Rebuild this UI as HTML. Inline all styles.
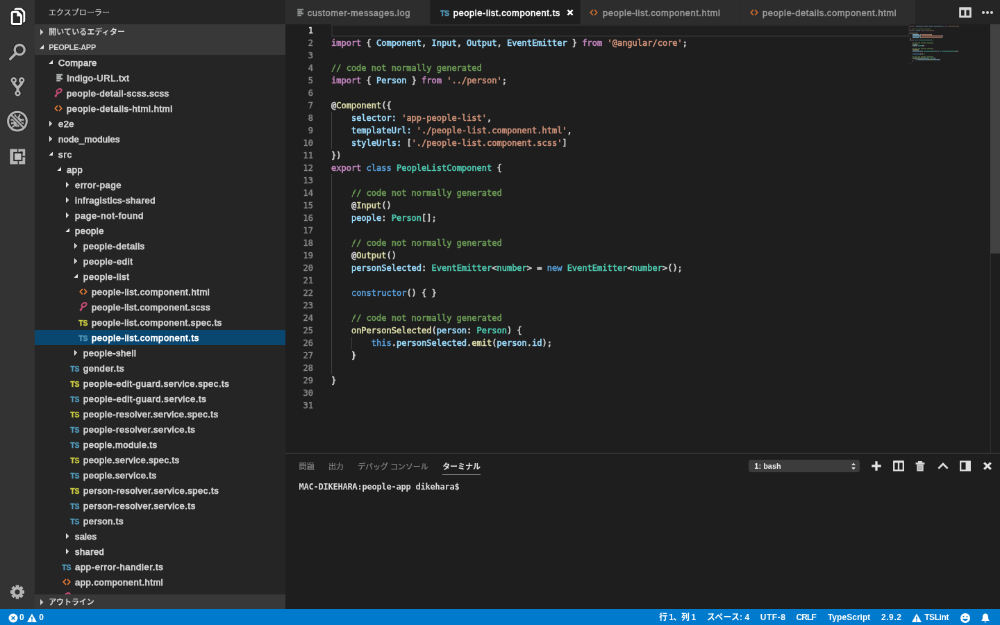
<!DOCTYPE html>
<html lang="ja">
<head>
<meta charset="utf-8">
<title>people-list.component.ts — people-app</title>
<style>
*{box-sizing:border-box;margin:0;padding:0}
html,body{width:1000px;height:625px;overflow:hidden;background:#1e1e1e}
body{font-family:"Liberation Sans","Noto Sans CJK JP",sans-serif;font-size:13px;color:#cccccc}
#app{position:absolute;left:0;top:0;width:1440px;height:900px;transform:scale(0.694444);transform-origin:0 0;background:#1e1e1e;overflow:hidden;will-change:transform}
#act{position:absolute;left:0;top:0;width:50px;height:878px;background:#333333}
#act .ai{position:absolute;left:0;width:50px;height:50px}
#act svg{position:absolute;left:0;top:0;width:50px;height:50px}
#side{position:absolute;left:50px;top:0;width:361px;height:878px;background:#252526;overflow:hidden}
#side .title{height:35px;line-height:36px;padding-left:20px;font-size:11px;color:#c4c4c4;-webkit-text-stroke:0.25px #c4c4c4;white-space:nowrap}
.hdr{height:22px;line-height:23px;font-size:11px;font-weight:bold;color:#d6d6d6;position:relative;padding-left:20.2px;white-space:nowrap}
.hdr svg{position:absolute;left:2px;top:3px;width:16px;height:16px}
#tree{position:absolute;left:0;top:79px;width:361px;height:777px;overflow:hidden}
.row{height:22px;line-height:22px;white-space:nowrap;position:relative;color:#d4d4d4;display:flex;align-items:center}
.row.sel{background:#094771;color:#ffffff}
.row .tw{width:16px;height:16px;flex:none;margin-right:3px}
.row .ic{width:16px;height:16px;flex:none;margin-right:4.2px;margin-left:-1.2px}
span.ic{font-size:10.500px;font-weight:bold;text-align:center;line-height:18px;letter-spacing:-0.2px;display:inline-block;-webkit-text-stroke:0.35px currentColor}
.ts{color:#519aba}.spec{color:#cbcb41}
.row .lb{font-size:13px;position:relative;top:1.2px;-webkit-text-stroke:0.75px currentColor}
#outline{position:absolute;left:0;top:856px;width:361px;background:#383839}
#tabs{position:absolute;left:411px;top:0;width:1029px;height:35px;background:#252526}
.tab{position:absolute;top:0;height:35px;background:#2d2d2d;color:#9a9a9a;font-size:13px;white-space:nowrap;border-right:1px solid #252526}
.tab.act{background:#1e1e1e;color:#ffffff}
.tab .tic{position:absolute;top:9.5px;width:16px;height:16px}
.tab .tic .ic{width:16px;height:16px;display:block}
.tab .tlb{position:absolute;top:0;line-height:37px;-webkit-text-stroke:0.5px currentColor}
.tab .tx{position:absolute;top:12px;width:12px;height:12px}
#editor{position:absolute;left:411px;top:35px;width:1029px;height:617px;background:#1e1e1e;overflow:hidden;font-family:"DejaVu Sans Mono","Liberation Mono",monospace;font-size:12px}
.ln{height:18px;line-height:18px;white-space:pre;position:relative}
.ln .no{position:absolute;left:0;width:40px;-webkit-text-stroke:0.5px currentColor;text-align:right;color:#858585}
.ln.cur .no{color:#e8e8e8;-webkit-text-stroke:0.4px #e8e8e8}
.ln .tx{position:absolute;left:66px;-webkit-text-stroke:0.6px currentColor}
.ln.cur::after{content:"";box-sizing:border-box;position:absolute;left:65.5px;top:0;width:833.500px;height:18px;border:2px solid #2c2c2c}
.k{color:#c586c0}.v{color:#9cdcfe}.s{color:#ce9178}.c{color:#6a9955}.b{color:#569cd6}.t{color:#4ec9b0}.f{color:#dcdcaa}.d{color:#d4d4d4}
.guide{position:absolute;width:1px;background:#404040}
.mini{position:absolute;left:899px;top:0}
#vs{position:absolute;left:1015px;top:0;width:14px;height:330px;background:#424242}
#vsl{position:absolute;left:1015px;top:0;width:1px;height:617px;background:#303030}
#panel{position:absolute;left:411px;top:652px;width:1029px;height:226px;background:#1e1e1e;border-top:1px solid #4a4a4a}
#panel .pt{position:absolute;top:8px;height:23px;line-height:22.500px;font-size:11px;color:#8a8a8a;white-space:nowrap;-webkit-text-stroke:0.2px currentColor}
#panel .pt.on{color:#e7e7e7;border-bottom:1px solid #8a8a8a;font-weight:bold;-webkit-text-stroke:0}
#term{position:absolute;left:19.5px;top:39.3px;font-family:"DejaVu Sans Mono","Liberation Mono",monospace;font-size:12px;font-weight:bold;color:#dcdcdc;line-height:18px;white-space:pre;letter-spacing:-0.224px}
#sel{position:absolute;left:667.3px;top:8.8px;width:159.3px;height:18.2px;background:#3c3c3c;border-radius:4px;color:#f0f0f0;font-size:11px;line-height:19px;padding-left:8px;font-weight:bold}
#panel svg.pi{position:absolute;top:8.1px;width:20px;height:20px}
#status{position:absolute;left:0;top:877px;width:1440px;height:23px;background:#007acc;color:#ffffff;font-size:12px;line-height:25px;white-space:nowrap}
#status .si{position:absolute;top:0;height:23px;font-weight:bold}
#status svg{position:absolute;top:4.5px;width:16px;height:16px}
</style>
</head>
<body>
<div id="app">
 <div id="act">
  <div class="ai" style="top:0"><svg viewBox="0 0 50 50"><g fill="none" stroke-linejoin="round"><path d="M22 15 V14.300 Q22 12.800 23.500 12.800 H30.200 L34.800 17.400 V29.600 Q34.800 31 33.400 31 H32" stroke="#1c1c1c" stroke-width="5.4"/><path d="M22 15 V14.300 Q22 12.800 23.500 12.800 H30.200 L34.800 17.400 V29.600 Q34.800 31 33.400 31 H32" stroke="#ffffff" stroke-width="3"/><path d="M17.200 18.700 Q17.200 17.200 18.700 17.200 H25.600 L30.600 22.200 V33 Q30.600 34.500 29.100 34.500 H18.700 Q17.200 34.500 17.200 33 Z" stroke="#1c1c1c" stroke-width="5.4"/><path d="M17.200 18.700 Q17.200 17.200 18.700 17.200 H25.600 L30.600 22.200 V33 Q30.600 34.500 29.100 34.500 H18.700 Q17.200 34.500 17.200 33 Z" stroke="#ffffff" stroke-width="3" fill="#2a2a2a"/></g><path d="M24.400 17.200 V23.400 H30.600 V22.200 L25.600 17.200 Z" fill="#ffffff"/></svg></div>
  <div class="ai" style="top:50px"><svg viewBox="0 0 50 50"><g fill="none"><circle cx="28.200" cy="21.600" r="7.100" stroke="#262626" stroke-width="5.600"/><path d="M22.600 27.200 L14.800 35" stroke="#262626" stroke-width="6" stroke-linecap="round"/><circle cx="28.200" cy="21.600" r="7.100" stroke="#b4b4b4" stroke-width="3.400"/><path d="M22.800 27 L14.800 35" stroke="#b4b4b4" stroke-width="3.800" stroke-linecap="round"/></g></svg></div>
  <div class="ai" style="top:100px"><svg viewBox="0 0 50 50"><g fill="none" stroke-linejoin="round"><g stroke="#262626"><circle cx="19.800" cy="15.600" r="2.900" stroke-width="5"/><circle cx="31.200" cy="15.600" r="2.900" stroke-width="5"/><circle cx="25.500" cy="34.200" r="2.900" stroke-width="5"/><path d="M19.800 18.800 V20.200 L25.500 27 V31 M31.200 18.800 V20.200 L25.500 27" stroke-width="6.200"/></g><g stroke="#b4b4b4"><path d="M19.800 18.600 V20.200 L25.500 27 V31.200 M31.200 18.600 V20.200 L25.500 27" stroke-width="3.900"/><circle cx="19.800" cy="15.600" r="2.900" stroke-width="2.700"/><circle cx="31.200" cy="15.600" r="2.900" stroke-width="2.700"/><circle cx="25.500" cy="34.200" r="2.900" stroke-width="2.700"/></g></g><circle cx="19.800" cy="15.600" r="1.500" fill="#2a2a2a"/><circle cx="31.200" cy="15.600" r="1.500" fill="#2a2a2a"/><circle cx="25.500" cy="34.200" r="1.500" fill="#2a2a2a"/></svg></div>
  <div class="ai" style="top:150px"><svg viewBox="0 0 50 50"><g fill="none"><circle cx="25" cy="24.600" r="13.400" stroke="#262626" stroke-width="5.200"/><circle cx="25" cy="24.600" r="13.400" stroke="#b4b4b4" stroke-width="3.100"/><g stroke="#b4b4b4" stroke-width="2.300"><path d="M21 14.800 L23 18.500 M29 14.800 L27 18.500 M15.500 22.500 H21 M29 22.500 H34.500 M16 27.500 H21 M29 27.500 H34 M17.500 33.500 L21.500 30 M32.500 33.500 L28.500 30"/></g></g><ellipse cx="25" cy="25.500" rx="5.600" ry="7.600" fill="#b4b4b4"/><path d="M25 19 V33" stroke="#555" stroke-width="1"/><path d="M16.800 16.400 L33.200 32.800" stroke="#2a2a2a" stroke-width="4.800"/><path d="M15.800 15.400 L34.200 33.800" stroke="#b4b4b4" stroke-width="2.500"/></svg></div>
  <div class="ai" style="top:200px"><svg viewBox="0 0 50 50"><rect x="13.300" y="13.500" width="24" height="24" fill="#262626"/><rect x="14.300" y="14.500" width="22" height="22" fill="#b4b4b4"/><path d="M25.700 14.500 V21 M26.300 30 V36.500" stroke="#2a2a2a" stroke-width="1.500"/><path d="M31 25.500 H36.300" stroke="#2a2a2a" stroke-width="1.700"/><rect x="20.300" y="20" width="11" height="11" fill="none" stroke="#2a2a2a" stroke-width="2.200"/><rect x="29" y="18.300" width="3.500" height="3" fill="#1a1a1a"/><rect x="21.200" y="20.900" width="9.200" height="9.200" fill="#c2c2c2"/></svg></div>
  <div class="ai" style="top:828px"><svg viewBox="0 0 50 50"><g transform="translate(25 24.500)"><g fill="#262626"><circle r="9"/></g><g fill="#b4b4b4"><rect x="-2.400" y="-10" width="4.800" height="20" rx="0.800"/><rect x="-2.400" y="-10" width="4.800" height="20" rx="0.800" transform="rotate(45)"/><rect x="-2.400" y="-10" width="4.800" height="20" rx="0.800" transform="rotate(90)"/><rect x="-2.400" y="-10" width="4.800" height="20" rx="0.800" transform="rotate(135)"/><circle r="7.600"/></g><circle r="2.900" fill="#333333" stroke="#222" stroke-width="1.200"/></g></svg></div>
 </div>

 <div id="side">
  <div style="position:absolute;left:0;top:35px;width:361px;height:44px;background:#383839"></div><div class="title"><span style="letter-spacing:0.045px">エクスプローラー</span></div>
  <div class="hdr"><svg viewBox="0 0 16 16"><path d="M6 3.800 L10.400 8.200 L6 12.600 Z" fill="#d0d0d0"/></svg><span style="letter-spacing:0.099px">開いているエディター</span></div>
  <div class="hdr"><svg viewBox="0 0 16 16"><path fill="#e8e8e8" d="M11 10.5H4.900L11 4.400z"/></svg><span style="letter-spacing:-0.318px">PEOPLE-APP</span></div>
  <div id="tree">
<div class="row" style="padding-left:15px"><svg class="tw" viewBox="0 0 16 16"><path fill="#e8e8e8" d="M11 10.07H5.344L11 4.414v5.656z"/></svg><span class="lb" style="letter-spacing:0.309px">Compare</span></div>
<div class="row" style="padding-left:27px"><svg class="ic" viewBox="0 0 16 16"><path d="M5.300 3.800 H14.100 M5.300 6.600 H12.100 M5.300 9.400 H14.100 M5.300 12.200 H11" fill="none" stroke="#c4c6c5" stroke-width="2.1"/></svg><span class="lb" style="letter-spacing:0.513px">Indigo-URL.txt</span></div>
<div class="row" style="padding-left:27px"><svg class="ic" viewBox="0 0 16 16"><path d="M4.6 13.300 C3 12.900 3.300 11 5 11.300 C5.500 10 6.200 9 7.100 8.200 C4.900 7.500 5 4.600 7.400 3 C9.800 1.400 13 1.700 12.600 4.100 C12.200 6.300 9.500 7.800 7.100 8.200" fill="none" stroke="#c84c76" stroke-width="2" stroke-linecap="round"/></svg><span class="lb" style="letter-spacing:0.573px">people-detail-scss.scss</span></div>
<div class="row" style="padding-left:27px"><svg class="ic" viewBox="0 0 16 16"><path d="M6.900 4.100 L3.300 8 L6.900 11.900 M9.100 4.100 L12.700 8 L9.100 11.900" fill="none" stroke="#e37933" stroke-width="1.800"/></svg><span class="lb" style="letter-spacing:0.61px">people-details-html.html</span></div>
<div class="row" style="padding-left:15px"><svg class="tw" viewBox="0 0 16 16"><path fill="#b0b0b0" d="M6 4v8l4-4z"/><path fill="#e8e8e8" d="M6 4v8l4-4-4-4zm1 2.414L8.586 8 7 9.586V6.414z"/></svg><span class="lb" style="letter-spacing:0.428px">e2e</span></div>
<div class="row" style="padding-left:15px"><svg class="tw" viewBox="0 0 16 16"><path fill="#b0b0b0" d="M6 4v8l4-4z"/><path fill="#e8e8e8" d="M6 4v8l4-4-4-4zm1 2.414L8.586 8 7 9.586V6.414z"/></svg><span class="lb" style="letter-spacing:0.286px">node_modules</span></div>
<div class="row" style="padding-left:15px"><svg class="tw" viewBox="0 0 16 16"><path fill="#e8e8e8" d="M11 10.07H5.344L11 4.414v5.656z"/></svg><span class="lb" style="letter-spacing:0.988px">src</span></div>
<div class="row" style="padding-left:27px"><svg class="tw" viewBox="0 0 16 16"><path fill="#e8e8e8" d="M11 10.07H5.344L11 4.414v5.656z"/></svg><span class="lb" style="letter-spacing:0.548px">app</span></div>
<div class="row" style="padding-left:39px"><svg class="tw" viewBox="0 0 16 16"><path fill="#b0b0b0" d="M6 4v8l4-4z"/><path fill="#e8e8e8" d="M6 4v8l4-4-4-4zm1 2.414L8.586 8 7 9.586V6.414z"/></svg><span class="lb" style="letter-spacing:0.655px">error-page</span></div>
<div class="row" style="padding-left:39px"><svg class="tw" viewBox="0 0 16 16"><path fill="#b0b0b0" d="M6 4v8l4-4z"/><path fill="#e8e8e8" d="M6 4v8l4-4-4-4zm1 2.414L8.586 8 7 9.586V6.414z"/></svg><span class="lb" style="letter-spacing:0.559px">infragistics-shared</span></div>
<div class="row" style="padding-left:39px"><svg class="tw" viewBox="0 0 16 16"><path fill="#b0b0b0" d="M6 4v8l4-4z"/><path fill="#e8e8e8" d="M6 4v8l4-4-4-4zm1 2.414L8.586 8 7 9.586V6.414z"/></svg><span class="lb" style="letter-spacing:0.776px">page-not-found</span></div>
<div class="row" style="padding-left:39px"><svg class="tw" viewBox="0 0 16 16"><path fill="#e8e8e8" d="M11 10.07H5.344L11 4.414v5.656z"/></svg><span class="lb" style="letter-spacing:0.471px">people</span></div>
<div class="row" style="padding-left:51px"><svg class="tw" viewBox="0 0 16 16"><path fill="#b0b0b0" d="M6 4v8l4-4z"/><path fill="#e8e8e8" d="M6 4v8l4-4-4-4zm1 2.414L8.586 8 7 9.586V6.414z"/></svg><span class="lb" style="letter-spacing:0.548px">people-details</span></div>
<div class="row" style="padding-left:51px"><svg class="tw" viewBox="0 0 16 16"><path fill="#b0b0b0" d="M6 4v8l4-4z"/><path fill="#e8e8e8" d="M6 4v8l4-4-4-4zm1 2.414L8.586 8 7 9.586V6.414z"/></svg><span class="lb" style="letter-spacing:0.647px">people-edit</span></div>
<div class="row" style="padding-left:51px"><svg class="tw" viewBox="0 0 16 16"><path fill="#e8e8e8" d="M11 10.07H5.344L11 4.414v5.656z"/></svg><span class="lb" style="letter-spacing:0.649px">people-list</span></div>
<div class="row" style="padding-left:63px"><svg class="ic" viewBox="0 0 16 16"><path d="M6.900 4.100 L3.300 8 L6.900 11.900 M9.100 4.100 L12.700 8 L9.100 11.900" fill="none" stroke="#e37933" stroke-width="1.800"/></svg><span class="lb" style="letter-spacing:0.573px">people-list.component.html</span></div>
<div class="row" style="padding-left:63px"><svg class="ic" viewBox="0 0 16 16"><path d="M4.6 13.300 C3 12.900 3.300 11 5 11.300 C5.500 10 6.200 9 7.100 8.200 C4.900 7.500 5 4.600 7.400 3 C9.800 1.400 13 1.700 12.600 4.100 C12.200 6.300 9.500 7.800 7.100 8.200" fill="none" stroke="#c84c76" stroke-width="2" stroke-linecap="round"/></svg><span class="lb" style="letter-spacing:0.544px">people-list.component.scss</span></div>
<div class="row" style="padding-left:63px"><span class="ic spec">TS</span><span class="lb" style="letter-spacing:0.548px">people-list.component.spec.ts</span></div>
<div class="row sel" style="padding-left:63px"><span class="ic ts">TS</span><span class="lb" style="letter-spacing:0.577px">people-list.component.ts</span></div>
<div class="row" style="padding-left:51px"><svg class="tw" viewBox="0 0 16 16"><path fill="#b0b0b0" d="M6 4v8l4-4z"/><path fill="#e8e8e8" d="M6 4v8l4-4-4-4zm1 2.414L8.586 8 7 9.586V6.414z"/></svg><span class="lb" style="letter-spacing:0.521px">people-shell</span></div>
<div class="row" style="padding-left:51px"><span class="ic ts">TS</span><span class="lb" style="letter-spacing:0.633px">gender.ts</span></div>
<div class="row" style="padding-left:51px"><span class="ic spec">TS</span><span class="lb" style="letter-spacing:0.571px">people-edit-guard.service.spec.ts</span></div>
<div class="row" style="padding-left:51px"><span class="ic ts">TS</span><span class="lb" style="letter-spacing:0.601px">people-edit-guard.service.ts</span></div>
<div class="row" style="padding-left:51px"><span class="ic spec">TS</span><span class="lb" style="letter-spacing:0.515px">people-resolver.service.spec.ts</span></div>
<div class="row" style="padding-left:51px"><span class="ic ts">TS</span><span class="lb" style="letter-spacing:0.536px">people-resolver.service.ts</span></div>
<div class="row" style="padding-left:51px"><span class="ic ts">TS</span><span class="lb" style="letter-spacing:0.471px">people.module.ts</span></div>
<div class="row" style="padding-left:51px"><span class="ic spec">TS</span><span class="lb" style="letter-spacing:0.452px">people.service.spec.ts</span></div>
<div class="row" style="padding-left:51px"><span class="ic ts">TS</span><span class="lb" style="letter-spacing:0.465px">people.service.ts</span></div>
<div class="row" style="padding-left:51px"><span class="ic spec">TS</span><span class="lb" style="letter-spacing:0.515px">person-resolver.service.spec.ts</span></div>
<div class="row" style="padding-left:51px"><span class="ic ts">TS</span><span class="lb" style="letter-spacing:0.521px">person-resolver.service.ts</span></div>
<div class="row" style="padding-left:51px"><span class="ic ts">TS</span><span class="lb" style="letter-spacing:0.499px">person.ts</span></div>
<div class="row" style="padding-left:39px"><svg class="tw" viewBox="0 0 16 16"><path fill="#b0b0b0" d="M6 4v8l4-4z"/><path fill="#e8e8e8" d="M6 4v8l4-4-4-4zm1 2.414L8.586 8 7 9.586V6.414z"/></svg><span class="lb" style="letter-spacing:0.15px">sales</span></div>
<div class="row" style="padding-left:39px"><svg class="tw" viewBox="0 0 16 16"><path fill="#b0b0b0" d="M6 4v8l4-4z"/><path fill="#e8e8e8" d="M6 4v8l4-4-4-4zm1 2.414L8.586 8 7 9.586V6.414z"/></svg><span class="lb" style="letter-spacing:0.402px">shared</span></div>
<div class="row" style="padding-left:39px"><span class="ic ts">TS</span><span class="lb" style="letter-spacing:0.66px">app-error-handler.ts</span></div>
<div class="row" style="padding-left:39px"><svg class="ic" viewBox="0 0 16 16"><path d="M6.900 4.100 L3.300 8 L6.900 11.900 M9.100 4.100 L12.700 8 L9.100 11.900" fill="none" stroke="#e37933" stroke-width="1.800"/></svg><span class="lb" style="letter-spacing:0.525px">app.component.html</span></div>
<div class="row" style="padding-left:39px"><svg class="ic" viewBox="0 0 16 16"><path d="M4.6 13.300 C3 12.900 3.300 11 5 11.300 C5.500 10 6.200 9 7.100 8.200 C4.900 7.500 5 4.600 7.400 3 C9.800 1.400 13 1.700 12.600 4.100 C12.200 6.300 9.500 7.800 7.100 8.200" fill="none" stroke="#c84c76" stroke-width="2" stroke-linecap="round"/></svg><span class="lb" style="letter-spacing:0.356px">app.component.scss</span></div>
  </div>
  <div id="outline" class="hdr"><svg viewBox="0 0 16 16"><path d="M6 3.800 L10.400 8.200 L6 12.600 Z" fill="#d0d0d0"/></svg><span style="letter-spacing:-0.096px">アウトライン</span></div>
 </div>

 <div id="tabs">
<div class="tab" style="left:0.12px;width:208.8px"><span class="tic" style="left:12.16px"><svg class="ic" viewBox="0 0 16 16"><path d="M5.300 3.800 H14.100 M5.300 6.600 H12.100 M5.300 9.400 H14.100 M5.300 12.200 H11" fill="none" stroke="#8e9190" stroke-width="2.1"/></svg></span><span class="tlb" style="left:31.68px;letter-spacing:0.48px">customer-messages.log</span></div>
<div class="tab act" style="left:208.92px;width:215.64px"><span class="tic" style="left:12.52px"><span class="ic ts">TS</span></span><span class="tlb" style="left:32.76px;letter-spacing:0.556px">people-list.component.ts</span><svg class="tx" style="left:195.24px" viewBox="0 0 12 12"><path d="M2.400 2.400 L9.600 9.600 M9.600 2.400 L2.400 9.600" stroke="#ffffff" stroke-width="2.500"/></svg></div>
<div class="tab" style="left:424.56px;width:230.04px"><span class="tic" style="left:11.8px"><svg class="ic" viewBox="0 0 16 16"><path d="M6.900 4.100 L3.300 8 L6.900 11.900 M9.100 4.100 L12.700 8 L9.100 11.900" fill="none" stroke="#c96a2c" stroke-width="1.800"/></svg></span><span class="tlb" style="left:32.4px;letter-spacing:0.539px">people-list.component.html</span></div>
<div class="tab" style="left:654.6px;width:253.73px"><span class="tic" style="left:12.3px"><svg class="ic" viewBox="0 0 16 16"><path d="M6.900 4.100 L3.300 8 L6.900 11.900 M9.100 4.100 L12.700 8 L9.100 11.900" fill="none" stroke="#c96a2c" stroke-width="1.800"/></svg></span><span class="tlb" style="left:32.4px;letter-spacing:0.555px">people-details.component.html</span></div>
  <svg style="position:absolute;left:968.7px;top:7.7px;width:20px;height:20px" viewBox="0 0 20 20"><path d="M2.600 4 H17.400 V16 H2.600 Z M10 4 V16" fill="none" stroke="#d8d8d8" stroke-width="2.800"/><path d="M2.600 4.500 H17.400" stroke="#d8d8d8" stroke-width="3.800"/></svg>
  <svg style="position:absolute;left:1001.2px;top:7.7px;width:20px;height:20px" viewBox="0 0 20 20"><circle cx="4" cy="10" r="2.100" fill="#d8d8d8"/><circle cx="10" cy="10" r="2.100" fill="#d8d8d8"/><circle cx="16" cy="10" r="2.100" fill="#d8d8d8"/></svg>
 </div>

 <div id="editor">
<div class="ln cur"><span class="no">1</span><span class="tx"></span></div>
<div class="ln"><span class="no">2</span><span class="tx"><span class="k">import</span><span class="d"> { </span><span class="v">Component</span><span class="d">, </span><span class="v">Input</span><span class="d">, </span><span class="v">Output</span><span class="d">, </span><span class="v">EventEmitter</span><span class="d"> } </span><span class="k">from</span><span class="d"> </span><span class="s">&#x27;@angular/core&#x27;</span><span class="d">;</span></span></div>
<div class="ln"><span class="no">3</span><span class="tx"></span></div>
<div class="ln"><span class="no">4</span><span class="tx"><span class="c">// code not normally generated</span></span></div>
<div class="ln"><span class="no">5</span><span class="tx"><span class="k">import</span><span class="d"> { </span><span class="v">Person</span><span class="d"> } </span><span class="k">from</span><span class="d"> </span><span class="s">&#x27;../person&#x27;</span><span class="d">;</span></span></div>
<div class="ln"><span class="no">6</span><span class="tx"></span></div>
<div class="ln"><span class="no">7</span><span class="tx"><span class="d">@</span><span class="f">Component</span><span class="d">({</span></span></div>
<div class="ln"><span class="no">8</span><span class="tx"><span class="d">    </span><span class="v">selector</span><span class="v">:</span><span class="d"> </span><span class="s">&#x27;app-people-list&#x27;</span><span class="d">,</span></span></div>
<div class="ln"><span class="no">9</span><span class="tx"><span class="d">    </span><span class="v">templateUrl</span><span class="v">:</span><span class="d"> </span><span class="s">&#x27;./people-list.component.html&#x27;</span><span class="d">,</span></span></div>
<div class="ln"><span class="no">10</span><span class="tx"><span class="d">    </span><span class="v">styleUrls</span><span class="v">:</span><span class="d"> [</span><span class="s">&#x27;./people-list.component.scss&#x27;</span><span class="d">]</span></span></div>
<div class="ln"><span class="no">11</span><span class="tx"><span class="d">})</span></span></div>
<div class="ln"><span class="no">12</span><span class="tx"><span class="k">export</span><span class="d"> </span><span class="b">class</span><span class="d"> </span><span class="t">PeopleListComponent</span><span class="d"> {</span></span></div>
<div class="ln"><span class="no">13</span><span class="tx"></span></div>
<div class="ln"><span class="no">14</span><span class="tx"><span class="d">    </span><span class="c">// code not normally generated</span></span></div>
<div class="ln"><span class="no">15</span><span class="tx"><span class="d">    @</span><span class="f">Input</span><span class="d">()</span></span></div>
<div class="ln"><span class="no">16</span><span class="tx"><span class="d">    </span><span class="v">people</span><span class="d">: </span><span class="t">Person</span><span class="d">[];</span></span></div>
<div class="ln"><span class="no">17</span><span class="tx"></span></div>
<div class="ln"><span class="no">18</span><span class="tx"><span class="d">    </span><span class="c">// code not normally generated</span></span></div>
<div class="ln"><span class="no">19</span><span class="tx"><span class="d">    @</span><span class="f">Output</span><span class="d">()</span></span></div>
<div class="ln"><span class="no">20</span><span class="tx"><span class="d">    </span><span class="v">personSelected</span><span class="d">: </span><span class="t">EventEmitter</span><span class="d">&lt;</span><span class="t">number</span><span class="d">&gt; = </span><span class="b">new</span><span class="d"> </span><span class="t">EventEmitter</span><span class="d">&lt;</span><span class="t">number</span><span class="d">&gt;();</span></span></div>
<div class="ln"><span class="no">21</span><span class="tx"></span></div>
<div class="ln"><span class="no">22</span><span class="tx"><span class="d">    </span><span class="b">constructor</span><span class="d">() { }</span></span></div>
<div class="ln"><span class="no">23</span><span class="tx"></span></div>
<div class="ln"><span class="no">24</span><span class="tx"><span class="d">    </span><span class="c">// code not normally generated</span></span></div>
<div class="ln"><span class="no">25</span><span class="tx"><span class="d">    </span><span class="f">onPersonSelected</span><span class="d">(</span><span class="v">person</span><span class="d">: </span><span class="t">Person</span><span class="d">) {</span></span></div>
<div class="ln"><span class="no">26</span><span class="tx"><span class="d">        </span><span class="b">this</span><span class="d">.</span><span class="v">personSelected</span><span class="d">.</span><span class="f">emit</span><span class="d">(</span><span class="v">person</span><span class="d">.</span><span class="v">id</span><span class="d">);</span></span></div>
<div class="ln"><span class="no">27</span><span class="tx"><span class="d">    }</span></span></div>
<div class="ln"><span class="no">28</span><span class="tx"></span></div>
<div class="ln"><span class="no">29</span><span class="tx"><span class="d">}</span></span></div>
<div class="ln"><span class="no">30</span><span class="tx"></span></div>
<div class="ln"><span class="no">31</span><span class="tx"></span></div>
  <div class="guide" style="left:66px;top:126px;height:54px"></div>
  <div class="guide" style="left:66px;top:216px;height:288px"></div>
  <div class="guide" style="left:95px;top:450px;height:18px"></div>
  <svg class="mini" width="120" height="64" viewBox="0 0 120 64" preserveAspectRatio="none"><rect x="0" y="2.2" width="6" height="1.300" fill="#c586c0" opacity="0.42"/><rect x="7" y="2.2" width="1" height="1.300" fill="#d4d4d4" opacity="0.42"/><rect x="9" y="2.2" width="9" height="1.300" fill="#9cdcfe" opacity="0.42"/><rect x="18" y="2.2" width="1" height="1.300" fill="#d4d4d4" opacity="0.42"/><rect x="20" y="2.2" width="5" height="1.300" fill="#9cdcfe" opacity="0.42"/><rect x="25" y="2.2" width="1" height="1.300" fill="#d4d4d4" opacity="0.42"/><rect x="27" y="2.2" width="6" height="1.300" fill="#9cdcfe" opacity="0.42"/><rect x="33" y="2.2" width="1" height="1.300" fill="#d4d4d4" opacity="0.42"/><rect x="35" y="2.2" width="12" height="1.300" fill="#9cdcfe" opacity="0.42"/><rect x="48" y="2.2" width="1" height="1.300" fill="#d4d4d4" opacity="0.42"/><rect x="50" y="2.2" width="4" height="1.300" fill="#c586c0" opacity="0.42"/><rect x="55" y="2.2" width="15" height="1.300" fill="#ce9178" opacity="0.42"/><rect x="70" y="2.2" width="1" height="1.300" fill="#d4d4d4" opacity="0.42"/><rect x="0" y="6.2" width="2" height="1.300" fill="#6a9955" opacity="0.42"/><rect x="3" y="6.2" width="4" height="1.300" fill="#6a9955" opacity="0.42"/><rect x="8" y="6.2" width="3" height="1.300" fill="#6a9955" opacity="0.42"/><rect x="12" y="6.2" width="8" height="1.300" fill="#6a9955" opacity="0.42"/><rect x="21" y="6.2" width="9" height="1.300" fill="#6a9955" opacity="0.42"/><rect x="0" y="8.2" width="6" height="1.300" fill="#c586c0" opacity="0.42"/><rect x="7" y="8.2" width="1" height="1.300" fill="#d4d4d4" opacity="0.42"/><rect x="9" y="8.2" width="6" height="1.300" fill="#9cdcfe" opacity="0.42"/><rect x="16" y="8.2" width="1" height="1.300" fill="#d4d4d4" opacity="0.42"/><rect x="18" y="8.2" width="4" height="1.300" fill="#c586c0" opacity="0.42"/><rect x="23" y="8.2" width="11" height="1.300" fill="#ce9178" opacity="0.42"/><rect x="34" y="8.2" width="1" height="1.300" fill="#d4d4d4" opacity="0.42"/><rect x="0" y="12.2" width="1" height="1.300" fill="#d4d4d4" opacity="0.42"/><rect x="1" y="12.2" width="9" height="1.300" fill="#dcdcaa" opacity="0.42"/><rect x="10" y="12.2" width="2" height="1.300" fill="#d4d4d4" opacity="0.42"/><rect x="4" y="14.2" width="8" height="1.300" fill="#9cdcfe" opacity="0.85"/><rect x="12" y="14.2" width="1" height="1.300" fill="#9cdcfe" opacity="0.85"/><rect x="14" y="14.2" width="17" height="1.300" fill="#ce9178" opacity="0.85"/><rect x="31" y="14.2" width="1" height="1.300" fill="#d4d4d4" opacity="0.85"/><rect x="4" y="16.2" width="11" height="1.300" fill="#9cdcfe" opacity="0.85"/><rect x="15" y="16.2" width="1" height="1.300" fill="#9cdcfe" opacity="0.85"/><rect x="17" y="16.2" width="30" height="1.300" fill="#ce9178" opacity="0.85"/><rect x="47" y="16.2" width="1" height="1.300" fill="#d4d4d4" opacity="0.85"/><rect x="4" y="18.2" width="9" height="1.300" fill="#9cdcfe" opacity="0.85"/><rect x="13" y="18.2" width="1" height="1.300" fill="#9cdcfe" opacity="0.85"/><rect x="15" y="18.2" width="1" height="1.300" fill="#d4d4d4" opacity="0.85"/><rect x="16" y="18.2" width="30" height="1.300" fill="#ce9178" opacity="0.85"/><rect x="46" y="18.2" width="1" height="1.300" fill="#d4d4d4" opacity="0.85"/><rect x="0" y="20.2" width="2" height="1.300" fill="#d4d4d4" opacity="0.42"/><rect x="0" y="22.2" width="6" height="1.300" fill="#c586c0" opacity="0.42"/><rect x="7" y="22.2" width="5" height="1.300" fill="#569cd6" opacity="0.42"/><rect x="13" y="22.2" width="19" height="1.300" fill="#4ec9b0" opacity="0.42"/><rect x="33" y="22.2" width="1" height="1.300" fill="#d4d4d4" opacity="0.42"/><rect x="4" y="26.2" width="2" height="1.300" fill="#6a9955" opacity="0.6"/><rect x="7" y="26.2" width="4" height="1.300" fill="#6a9955" opacity="0.6"/><rect x="12" y="26.2" width="3" height="1.300" fill="#6a9955" opacity="0.6"/><rect x="16" y="26.2" width="8" height="1.300" fill="#6a9955" opacity="0.6"/><rect x="25" y="26.2" width="9" height="1.300" fill="#6a9955" opacity="0.6"/><rect x="4" y="28.2" width="1" height="1.300" fill="#d4d4d4" opacity="0.6"/><rect x="5" y="28.2" width="5" height="1.300" fill="#dcdcaa" opacity="0.6"/><rect x="10" y="28.2" width="2" height="1.300" fill="#d4d4d4" opacity="0.6"/><rect x="4" y="30.2" width="6" height="1.300" fill="#9cdcfe" opacity="0.6"/><rect x="10" y="30.2" width="1" height="1.300" fill="#d4d4d4" opacity="0.6"/><rect x="12" y="30.2" width="6" height="1.300" fill="#4ec9b0" opacity="0.6"/><rect x="18" y="30.2" width="3" height="1.300" fill="#d4d4d4" opacity="0.6"/><rect x="4" y="34.2" width="2" height="1.300" fill="#6a9955" opacity="0.6"/><rect x="7" y="34.2" width="4" height="1.300" fill="#6a9955" opacity="0.6"/><rect x="12" y="34.2" width="3" height="1.300" fill="#6a9955" opacity="0.6"/><rect x="16" y="34.2" width="8" height="1.300" fill="#6a9955" opacity="0.6"/><rect x="25" y="34.2" width="9" height="1.300" fill="#6a9955" opacity="0.6"/><rect x="4" y="36.2" width="1" height="1.300" fill="#d4d4d4" opacity="0.6"/><rect x="5" y="36.2" width="6" height="1.300" fill="#dcdcaa" opacity="0.6"/><rect x="11" y="36.2" width="2" height="1.300" fill="#d4d4d4" opacity="0.6"/><rect x="4" y="38.2" width="14" height="1.300" fill="#9cdcfe" opacity="0.6"/><rect x="18" y="38.2" width="1" height="1.300" fill="#d4d4d4" opacity="0.6"/><rect x="20" y="38.2" width="12" height="1.300" fill="#4ec9b0" opacity="0.6"/><rect x="32" y="38.2" width="1" height="1.300" fill="#d4d4d4" opacity="0.6"/><rect x="33" y="38.2" width="6" height="1.300" fill="#4ec9b0" opacity="0.6"/><rect x="39" y="38.2" width="1" height="1.300" fill="#d4d4d4" opacity="0.6"/><rect x="41" y="38.2" width="1" height="1.300" fill="#d4d4d4" opacity="0.6"/><rect x="43" y="38.2" width="3" height="1.300" fill="#569cd6" opacity="0.6"/><rect x="47" y="38.2" width="12" height="1.300" fill="#4ec9b0" opacity="0.6"/><rect x="59" y="38.2" width="1" height="1.300" fill="#d4d4d4" opacity="0.6"/><rect x="60" y="38.2" width="6" height="1.300" fill="#4ec9b0" opacity="0.6"/><rect x="66" y="38.2" width="4" height="1.300" fill="#d4d4d4" opacity="0.6"/><rect x="4" y="42.2" width="11" height="1.300" fill="#569cd6" opacity="0.6"/><rect x="15" y="42.2" width="2" height="1.300" fill="#d4d4d4" opacity="0.6"/><rect x="18" y="42.2" width="1" height="1.300" fill="#d4d4d4" opacity="0.6"/><rect x="20" y="42.2" width="1" height="1.300" fill="#d4d4d4" opacity="0.6"/><rect x="4" y="46.2" width="2" height="1.300" fill="#6a9955" opacity="0.6"/><rect x="7" y="46.2" width="4" height="1.300" fill="#6a9955" opacity="0.6"/><rect x="12" y="46.2" width="3" height="1.300" fill="#6a9955" opacity="0.6"/><rect x="16" y="46.2" width="8" height="1.300" fill="#6a9955" opacity="0.6"/><rect x="25" y="46.2" width="9" height="1.300" fill="#6a9955" opacity="0.6"/><rect x="4" y="48.2" width="16" height="1.300" fill="#dcdcaa" opacity="0.6"/><rect x="20" y="48.2" width="1" height="1.300" fill="#d4d4d4" opacity="0.6"/><rect x="21" y="48.2" width="6" height="1.300" fill="#9cdcfe" opacity="0.6"/><rect x="27" y="48.2" width="1" height="1.300" fill="#d4d4d4" opacity="0.6"/><rect x="29" y="48.2" width="6" height="1.300" fill="#4ec9b0" opacity="0.6"/><rect x="35" y="48.2" width="1" height="1.300" fill="#d4d4d4" opacity="0.6"/><rect x="37" y="48.2" width="1" height="1.300" fill="#d4d4d4" opacity="0.6"/><rect x="8" y="50.2" width="4" height="1.300" fill="#569cd6" opacity="0.6"/><rect x="12" y="50.2" width="1" height="1.300" fill="#d4d4d4" opacity="0.6"/><rect x="13" y="50.2" width="14" height="1.300" fill="#9cdcfe" opacity="0.6"/><rect x="27" y="50.2" width="1" height="1.300" fill="#d4d4d4" opacity="0.6"/><rect x="28" y="50.2" width="4" height="1.300" fill="#dcdcaa" opacity="0.6"/><rect x="32" y="50.2" width="1" height="1.300" fill="#d4d4d4" opacity="0.6"/><rect x="33" y="50.2" width="6" height="1.300" fill="#9cdcfe" opacity="0.6"/><rect x="39" y="50.2" width="1" height="1.300" fill="#d4d4d4" opacity="0.6"/><rect x="40" y="50.2" width="2" height="1.300" fill="#9cdcfe" opacity="0.6"/><rect x="42" y="50.2" width="2" height="1.300" fill="#d4d4d4" opacity="0.6"/><rect x="4" y="52.2" width="1" height="1.300" fill="#d4d4d4" opacity="0.6"/><rect x="0" y="56.2" width="1" height="1.300" fill="#d4d4d4" opacity="0.42"/></svg>
  <div id="vsl"></div>
  <div id="vs"></div>
 </div>

 <div id="panel">
  <div class="pt" style="left:19.56px;width:22.32px;letter-spacing:0.32px">問題</div>
<div class="pt" style="left:62.04px;width:21.6px;letter-spacing:-0.4px">出力</div>
<div class="pt" style="left:104.16px;width:101.52px;letter-spacing:-0.06px">デバッグ コンソール</div>
<div class="pt on" style="left:226.2px;width:54.72px;letter-spacing:-0.07px">ターミナル</div>
  <div id="term">MAC-DIKEHARA:people-app dikehara$ </div>
  <div id="sel">1: bash<svg style="position:absolute;right:5px;top:3px;width:8px;height:13px" viewBox="0 0 8 13"><path d="M1 5 L4 1.500 L7 5 Z M1 8 L4 11.500 L7 8 Z" fill="#e0e0e0"/></svg></div>
  <svg class="pi" style="left:840.8px" viewBox="0 0 20 20"><path d="M10 3.300 V16.700 M3.300 10 H16.700" stroke="#e4e4e4" stroke-width="3.300"/></svg>
  <svg class="pi" style="left:872.7px" viewBox="0 0 20 20"><path d="M3.200 3.600 H16.800 V16.400 H3.200 Z M10 3.600 V16.400" fill="none" stroke="#e0e0e0" stroke-width="2.300"/><path d="M3.200 4 H16.800" stroke="#e0e0e0" stroke-width="3"/></svg>
  <svg class="pi" style="left:904.1px" viewBox="0 0 20 20"><path d="M4.200 5.600 H15.800 V7 H4.200 Z M7.600 5.600 V3.700 H12.400 V5.600" fill="#d6d6d6" stroke="#d6d6d6" stroke-width="1.300"/><path d="M5.300 8 H14.700 V17 Q14.700 17.600 14.100 17.600 H5.900 Q5.300 17.600 5.300 17 Z" fill="#d0d0d0"/><path d="M8 9.500 V16 M10 9.500 V16 M12 9.500 V16" stroke="#909090" stroke-width="0.900"/></svg>
  <svg class="pi" style="left:936.8px" viewBox="0 0 20 20"><path d="M3.400 13.600 L10 7 L16.600 13.600" fill="none" stroke="#e0e0e0" stroke-width="2.700"/></svg>
  <svg class="pi" style="left:969px" viewBox="0 0 20 20"><path d="M3.200 3.600 H16.800 V16.400 H3.200 Z" fill="none" stroke="#e0e0e0" stroke-width="2.300"/><rect x="10.600" y="3.600" width="6.200" height="12.800" fill="#e0e0e0"/></svg>
  <svg class="pi" style="left:1000.9px" viewBox="0 0 20 20"><path d="M5.200 5.300 L14.800 14.700 M14.800 5.300 L5.200 14.700" stroke="#e4e4e4" stroke-width="3.100"/></svg>
 </div>

 <div id="status">
<span class="si" style="left:28.08px;letter-spacing:0.513px">0</span>
<span class="si" style="left:56.16px;letter-spacing:0.513px">0</span>
<span class="si" style="left:948.96px;letter-spacing:-0.483px">行 1、列 1</span>
<span class="si" style="left:1018.08px;letter-spacing:0.08px">スペース: 4</span>
<span class="si" style="left:1094.83px;letter-spacing:0.5px">UTF-8</span>
<span class="si" style="left:1146.53px;letter-spacing:-0.923px">CRLF</span>
<span class="si" style="left:1191.89px;letter-spacing:0.04px">TypeScript</span>
<span class="si" style="left:1268.93px;letter-spacing:0.596px">2.9.2</span>
<span class="si" style="left:1331.14px;letter-spacing:-0.41px">TSLint</span>
  <svg style="left:10.6px" viewBox="0 0 16 16"><circle cx="8" cy="8" r="6.5" fill="#fff"/><path d="M5.500 5.500 L10.500 10.500 M10.500 5.500 L5.500 10.500" stroke="#007acc" stroke-width="1.6"/></svg>
  <svg style="left:38.4px" viewBox="0 0 16 16"><path d="M8 1.500 L15 14 H1 Z" fill="#fff"/><path d="M8 6 V10.500 M8 11.500 V13" stroke="#007acc" stroke-width="1.6"/></svg>






  <svg style="left:1312px" viewBox="0 0 16 16"><path d="M8 1.500 L15 14 H1 Z" fill="#fff"/><path d="M8 6 V10.500 M8 11.500 V13" stroke="#007acc" stroke-width="1.6"/></svg>
  <svg style="left:1382px" viewBox="0 0 16 16"><circle cx="8" cy="8" r="7" fill="#fff"/><circle cx="5.500" cy="6" r="1.100" fill="#007acc"/><circle cx="10.500" cy="6" r="1.100" fill="#007acc"/><path d="M4 9 C5 13 11 13 12 9 Z" fill="#007acc"/></svg>
  <svg style="left:1411px" viewBox="0 0 16 16"><path d="M8 1.500 C5 1.500 4 4 4 7 C4 10 3 11 2 12 H14 C13 11 12 10 12 7 C12 4 11 1.500 8 1.500 Z M6.500 13 A1.500 1.500 0 0 0 9.5 13 Z" fill="#fff"/></svg>
 </div>
</div>
</body>
</html>
